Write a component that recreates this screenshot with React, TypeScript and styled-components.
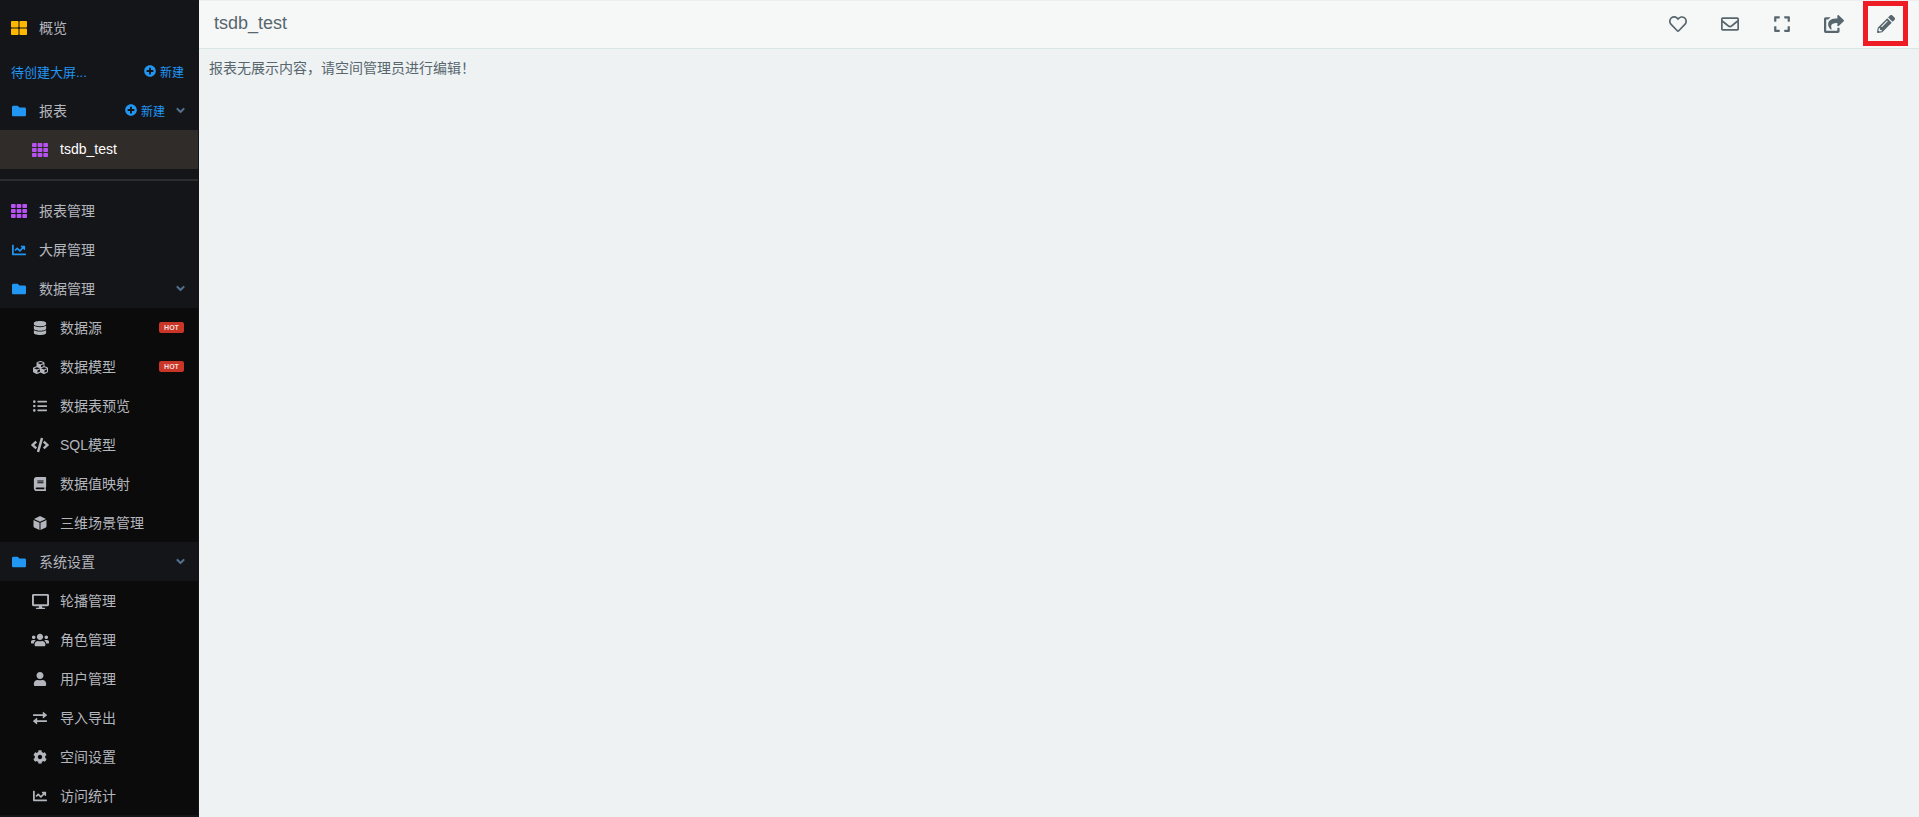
import React from 'react';
import styled, { createGlobalStyle, css } from 'styled-components';
import {
  FaThLarge, FaTh, FaFolder, FaPlusCircle, FaChevronDown, FaChartLine, FaDatabase, FaCubes, FaListUl,
  FaCode, FaBook, FaDesktop, FaUsers, FaUser, FaCog, FaRegHeart, FaRegEnvelope, FaExpand,
  FaShareSquare, FaPencilAlt,
} from 'react-icons/fa';

const GlobalStyle = createGlobalStyle`
  *, *::before, *::after { box-sizing: border-box; }
  body {
    margin: 0;
    background: #eef2f3;
    color: #58666e;
    font-family: "Liberation Sans", "Noto Sans CJK SC", sans-serif;
    font-size: 14px;
  }
  button { font: inherit; border: 0; background: none; padding: 0; cursor: pointer; }
  a { color: inherit; text-decoration: none; }
  svg { display: block; }
`;

const Shell = styled.div`
  display: flex;
  min-height: 100vh;
`;

const Sidebar = styled.nav`
  flex: 0 0 199px;
  padding: 8px 1px 0 0;
  background: #141519;
  color: #b4b6bd;
`;

const Section = styled.div<{ $divided?: boolean }>`
  ${(p) => p.$divided && css`
    margin-top: 10px;
    padding-top: 10px;
    border-top: 2px solid #2a2c2e;
  `}
`;

const SubMenu = styled.div`
  background: #0b0b0b;
`;

const Row = styled.div<{ $nested?: boolean; $active?: boolean }>`
  display: flex;
  align-items: center;
  height: 39px;
  padding: 0 14px 1px ${(p) => (p.$nested ? 31 : 10)}px;
  background: ${(p) => (p.$active ? '#302c2a' : 'transparent')};
  color: ${(p) => (p.$active ? '#ffffff' : 'inherit')};
`;

const RowLink = styled.a`
  display: flex;
  flex: 1;
  align-items: center;
  height: 100%;
  gap: 11px;
  white-space: nowrap;
`;

const IconSlot = styled.span<{ $color?: string }>`
  display: flex;
  flex: 0 0 18px;
  justify-content: center;
  padding-top: 2px;
  color: ${(p) => p.$color ?? '#b4b6bd'};
`;

const PendingRow = styled(Row)`
  margin-top: 5px;
  padding-left: 11px;
  color: #2196f3;
  font-size: 13px;
`;

const CreateButton = styled.button`
  display: flex;
  align-items: center;
  gap: 4px;
  color: #2196f3;
  font-size: 12px;
`;

const ToggleButton = styled.button`
  margin-left: 11px;
  margin-right: -1px;
  color: #587898;

  svg {
    overflow: visible;
    stroke: currentColor;
    stroke-width: 40px;
  }
`;

const HotBadge = styled.span`
  width: 25px;
  border-radius: 2px;
  background: #c93526;
  color: #f5dedb;
  font-size: 7px;
  font-weight: bold;
  line-height: 11px;
  text-align: center;
`;

const Main = styled.main`
  flex: 1;
  min-width: 0;
`;

const TopBar = styled.header`
  display: flex;
  align-items: center;
  justify-content: space-between;
  height: 49px;
  padding: 0 11px 2px 15px;
  border-top: 1px solid #edefef;
  border-bottom: 1px solid #dae6e4;
  background: #f6f8f8;
`;

const Title = styled.h1`
  margin: 0;
  font-size: 18px;
  font-weight: normal;
`;

const Actions = styled.div`
  display: flex;
  align-items: center;
  gap: 7px;
`;

const ActionButton = styled.button<{ $marked?: boolean }>`
  display: flex;
  align-items: center;
  justify-content: center;
  width: 45px;
  height: 45px;
  border: ${(p) => (p.$marked ? '5px solid #ee1c24' : '0')};
  color: #58666e;
`;

const EmptyText = styled.p`
  margin: 0;
  padding: 9px 10px;
  line-height: 21px;
`;

const ExchangeIcon = () => (
  <svg width="14" height="14" viewBox="0 0 14 14" fill="currentColor" aria-hidden="true">
    <path d="M.4 3.2H9.800V1.300q0-.7.6-.3L13.800 3.700q.4.4 0 .8L10.400 7.200q-.6.4-.6-.3V5H.4Q0 5 0 4.600v-1Q0 3.200.4 3.200Z" />
    <path d="M13.600 9.200H4.200V7.300q0-.7-.6-.3L.2 9.700q-.4.4 0 .8L3.600 13.200q.6.4.6-.3V11h9.400q.4 0 .4-.4v-1q0-.4-.4-.4Z" />
  </svg>
);

const CubeIcon = () => (
  <svg width="14" height="14" viewBox="0 0 14 14" fill="currentColor" aria-hidden="true">
    <path d="M7 0 13 3 7 5.800 1 3Z" />
    <path d="M.5 4 6.500 6.800V14L1.200 11.400Q.5 11 .5 10.300Z" />
    <path d="M13.500 4 7.500 6.800V14L12.800 11.400Q13.500 11 13.500 10.300Z" />
  </svg>
);

interface ItemProps {
  icon: React.ReactNode;
  label: string;
  color?: string;
  nested?: boolean;
  active?: boolean;
  children?: React.ReactNode;
}

const Item = ({ icon, label, color, nested, active, children }: ItemProps) => (
  <Row $nested={nested} $active={active}>
    <RowLink href="#" aria-current={active ? 'page' : undefined}>
      <IconSlot $color={color}>{icon}</IconSlot>
      {label}
    </RowLink>
    {children}
  </Row>
);

const Create = () => (
  <CreateButton type="button"><FaPlusCircle size={12} />新建</CreateButton>
);

const Toggle = ({ label }: { label: string }) => (
  <ToggleButton type="button" aria-label={label}><FaChevronDown size={9} /></ToggleButton>
);

const dataItems = [
  { icon: <FaDatabase size={14} />, label: '数据源', hot: true },
  { icon: <FaCubes size={15} />, label: '数据模型', hot: true },
  { icon: <FaListUl size={14} />, label: '数据表预览' },
  { icon: <FaCode size={18} />, label: 'SQL模型' },
  { icon: <FaBook size={14} />, label: '数据值映射' },
  { icon: <CubeIcon />, label: '三维场景管理' },
];

const systemItems = [
  { icon: <FaDesktop size={17} />, label: '轮播管理' },
  { icon: <FaUsers size={18} />, label: '角色管理' },
  { icon: <FaUser size={14} />, label: '用户管理' },
  { icon: <ExchangeIcon />, label: '导入导出' },
  { icon: <FaCog size={14} />, label: '空间设置' },
  { icon: <FaChartLine size={14} />, label: '访问统计' },
];

const actions = [
  { icon: <FaRegHeart size={18} />, label: '收藏' },
  { icon: <FaRegEnvelope size={18} />, label: '邮件' },
  { icon: <FaExpand size={18} />, label: '全屏' },
  { icon: <FaShareSquare size={20} />, label: '分享' },
  { icon: <FaPencilAlt size={18} />, label: '编辑', marked: true },
];

export default function App() {
  return (
    <>
      <GlobalStyle />
      <Shell>
        <Sidebar>
          <Section>
            <Item icon={<FaThLarge size={16} />} color="#ffb800" label="概览" />
            <PendingRow>
              <RowLink href="#">待创建大屏...</RowLink>
              <Create />
            </PendingRow>
            <Item icon={<FaFolder size={14} />} color="#2196f3" label="报表">
              <Create />
              <Toggle label="收起报表" />
            </Item>
            <Item icon={<FaTh size={16} />} color="#b552f0" label="tsdb_test" nested active />
          </Section>
          <Section $divided>
            <Item icon={<FaTh size={16} />} color="#b552f0" label="报表管理" />
            <Item icon={<FaChartLine size={14} />} color="#2196f3" label="大屏管理" />
            <Item icon={<FaFolder size={14} />} color="#2196f3" label="数据管理">
              <Toggle label="收起数据管理" />
            </Item>
            <SubMenu>
              {dataItems.map((item) => (
                <Item key={item.label} icon={item.icon} label={item.label} nested>
                  {item.hot && <HotBadge>HOT</HotBadge>}
                </Item>
              ))}
            </SubMenu>
            <Item icon={<FaFolder size={14} />} color="#2196f3" label="系统设置">
              <Toggle label="收起系统设置" />
            </Item>
            <SubMenu>
              {systemItems.map((item) => (
                <Item key={item.label} icon={item.icon} label={item.label} nested />
              ))}
            </SubMenu>
          </Section>
        </Sidebar>
        <Main>
          <TopBar>
            <Title>tsdb_test</Title>
            <Actions>
              {actions.map((a) => (
                <ActionButton key={a.label} type="button" aria-label={a.label} $marked={a.marked}>
                  {a.icon}
                </ActionButton>
              ))}
            </Actions>
          </TopBar>
          <EmptyText>报表无展示内容，请空间管理员进行编辑！</EmptyText>
        </Main>
      </Shell>
    </>
  );
}
